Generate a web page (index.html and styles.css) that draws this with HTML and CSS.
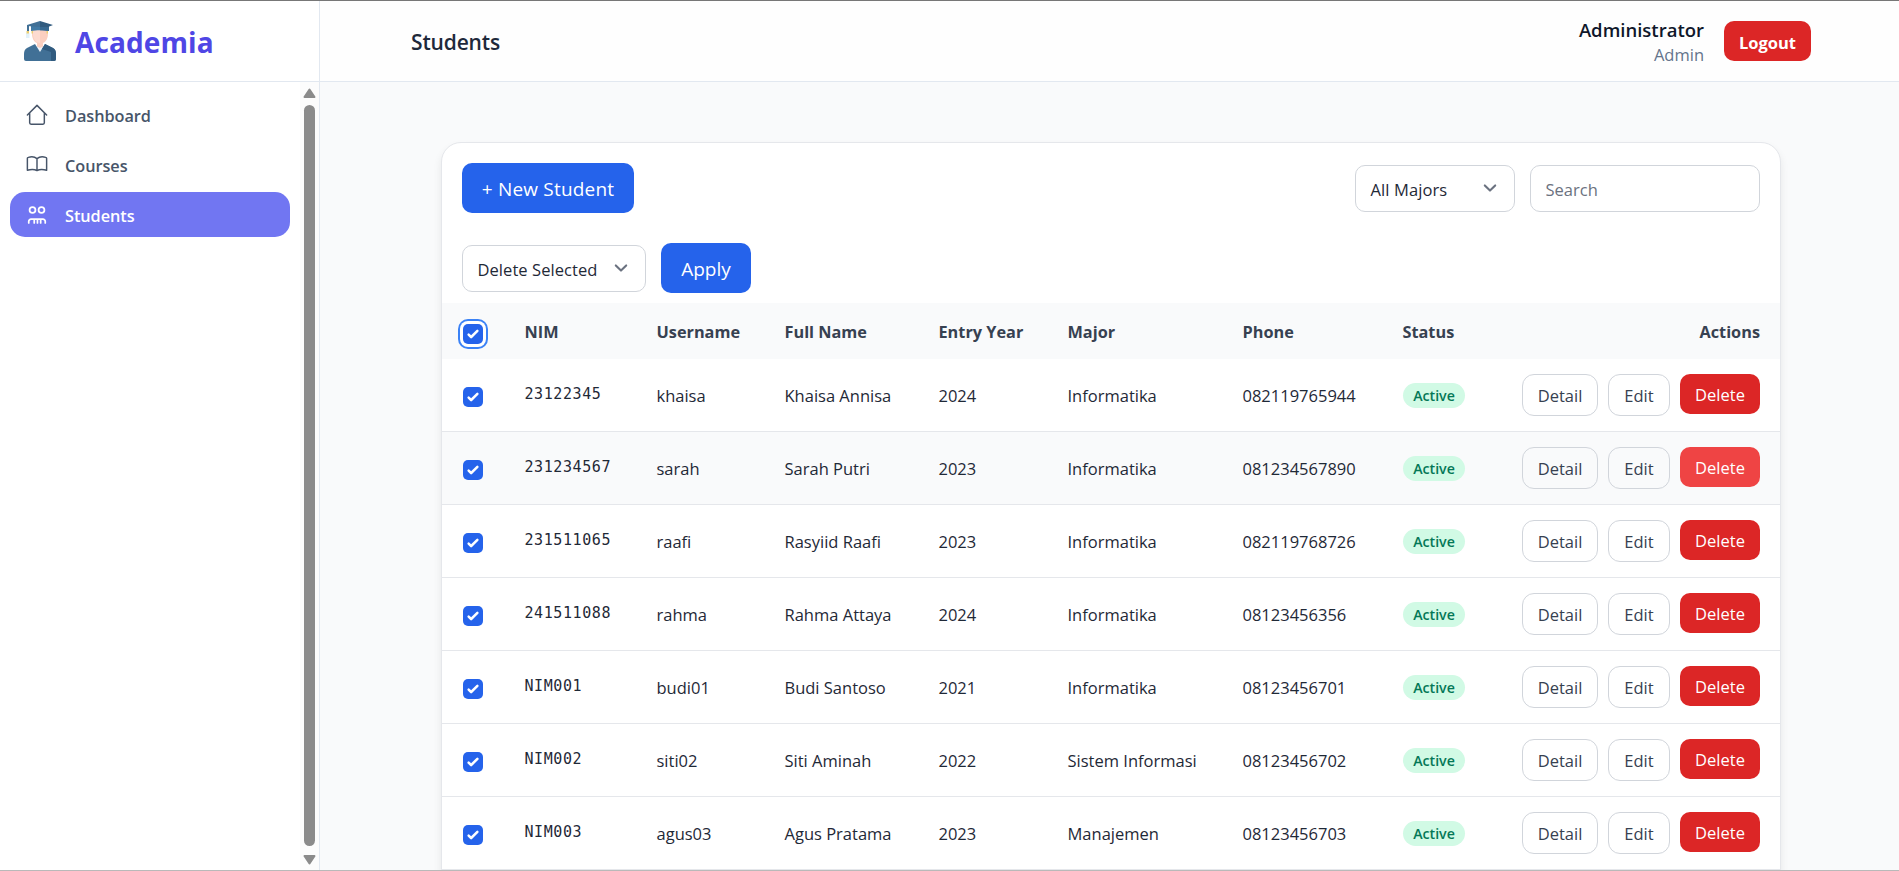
FILE: index.html
```html
<!DOCTYPE html>
<html lang="en">
<head>
<meta charset="utf-8">
<title>Students - Academia</title>
<link rel="stylesheet" href="styles.css">
</head>
<body>
<svg class="defs" aria-hidden="true">
  <symbol id="tick" viewBox="0 0 16 16"><path fill="#fff" d="M12.207 4.793a1 1 0 0 1 0 1.414l-5 5a1 1 0 0 1-1.414 0l-2-2a1 1 0 0 1 1.414-1.414L6.5 9.086l4.293-4.293a1 1 0 0 1 1.414 0z"/></symbol>
  <symbol id="chevron" viewBox="0 0 20 20"><path fill="none" stroke="#6b7280" stroke-width="1.6" stroke-linecap="round" stroke-linejoin="round" d="M6 8l4 4 4-4"/></symbol>
</svg>
<div class="app">
  <aside class="sidebar">
    <div class="brand">
      <svg class="logo" viewBox="0 0 32 40">
        <path fill="#fbcfc0" d="M8 9h16v4c0 4-2 8-5 9v6h-6v-6c-3-1-5-5-5-9z"/>
        <path fill="#fddbd0" d="M9 9h7v13c-4 0-7-4-7-9z"/>
        <path fill="#eef4fa" d="M12 25l4 2 4-2v3l-4 4-4-4z"/>
        <path fill="#417096" d="M11 23l5 8 5-8 8 4c2 1 3 3 3 6v5q0 2-2 2H2q-2 0-2-2v-5c0-3 1-5 3-6z"/>
        <path fill="#315b7f" d="M21 23l8 4c2 1 3 3 3 6v5q0 2-2 2h-3V31l-9-3z"/>
        <path fill="#417aa5" d="M7 5h18v5c-5-1-13-1-18 0z"/>
        <path fill="#376991" d="M16 5h9v5c-3-.6-6-.8-9-.8z"/>
        <path fill="#417096" d="M3 4l13-4v6L3 5z"/>
        <path fill="#315b7f" d="M16 0l13 4-5 2-8 0z"/>
        <path fill="#417096" d="M3 4h2v6H3z"/>
        <path fill="#e2f1fa" d="M2 12h3.500v5H2z"/>
        <path fill="#eccf72" d="M2.500 10H5v2.500H2.500zM7.500 10H9v2.500H7.500zM22.500 10H24v2.500h-1.500z"/>
      </svg>
      <span class="brand-name">Academia</span>
    </div>
    <div class="side-body">
      <nav class="nav">
        <a class="nav-item"><svg class="nav-icon" viewBox="0 0 24 24"><path d="M1.500 12L12 1.500 22.500 12M4 9.700V20.500a1.500 1.500 0 0 0 1.500 1.500h13a1.500 1.500 0 0 0 1.500-1.500V9.700"/></svg><span>Dashboard</span></a>
        <a class="nav-item"><svg class="nav-icon" viewBox="0 0 24 24"><path d="M12 5C9.500 3 5.500 2.800 2.500 3.700a1 1 0 0 0-1 1v13C5 16.600 9.500 16.700 12 18c2.500-1.300 7-1.400 10.500-.3v-13a1 1 0 0 0-1-1C18.500 2.800 14.500 3 12 5zM12 5v13"/></svg><span>Courses</span></a>
        <a class="nav-item active"><svg class="nav-icon" viewBox="0 0 24 24"><circle cx="7.100" cy="6.500" r="3.200"/><circle cx="16.900" cy="6.500" r="3.200"/><path d="M3 20.600v-1.600a2.500 2.500 0 0 1 2.500-2.500h13a2.500 2.500 0 0 1 2.500 2.500v1.600M9 16.500v4.100M12.500 16.500v4.100M16 16.500v4.100"/></svg><span>Students</span></a>
      </nav>
      <div class="scrollbar">
        <svg width="13" height="10" viewBox="0 0 13 10"><path fill="#8b8b8b" stroke="#8b8b8b" stroke-width="2" stroke-linejoin="round" d="M6.500 1.500L11.500 9h-10z"/></svg>
        <div class="thumb"></div>
        <svg width="13" height="10" viewBox="0 0 13 10"><path fill="#8b8b8b" stroke="#8b8b8b" stroke-width="2" stroke-linejoin="round" d="M6.500 8.500L11.500 1h-10z"/></svg>
      </div>
    </div>
  </aside>
  <div class="content">
    <header class="topbar">
      <h1>Students</h1>
      <div class="user">
        <div class="user-info"><div class="user-name">Administrator</div><div class="user-role">Admin</div></div>
        <button class="logout">Logout</button>
      </div>
    </header>
    <main>
      <section class="card">
        <div class="toolbar">
          <button class="primary new">+ New Student</button>
          <div class="filters">
            <div class="select majors"><span>All Majors</span><svg><use href="#chevron"/></svg></div>
            <input class="search" placeholder="Search">
          </div>
        </div>
        <div class="bulk">
          <div class="select action"><span>Delete Selected</span><svg><use href="#chevron"/></svg></div>
          <button class="primary apply">Apply</button>
        </div>
        <table>
          <colgroup><col class="c1"><col class="c2"><col class="c3"><col class="c4"><col class="c5"><col class="c6"><col class="c7"><col class="c8"><col></colgroup>
          <thead><tr><th><span class="check focus"><svg><use href="#tick"/></svg></span></th><th>NIM</th><th>Username</th><th>Full Name</th><th>Entry Year</th><th>Major</th><th>Phone</th><th>Status</th><th class="right">Actions</th></tr></thead>
          <tbody>
            <tr><td><span class="check"><svg><use href="#tick"/></svg></span></td><td class="mono">23122345</td><td>khaisa</td><td>Khaisa Annisa</td><td>2024</td><td>Informatika</td><td>082119765944</td><td><span class="badge">Active</span></td><td><div class="actions"><button class="btn detail">Detail</button><button class="btn edit">Edit</button><button class="btn delete">Delete</button></div></td></tr>
            <tr class="hovered"><td><span class="check"><svg><use href="#tick"/></svg></span></td><td class="mono">231234567</td><td>sarah</td><td>Sarah Putri</td><td>2023</td><td>Informatika</td><td>081234567890</td><td><span class="badge">Active</span></td><td><div class="actions"><button class="btn detail">Detail</button><button class="btn edit">Edit</button><button class="btn delete">Delete</button></div></td></tr>
            <tr><td><span class="check"><svg><use href="#tick"/></svg></span></td><td class="mono">231511065</td><td>raafi</td><td>Rasyiid Raafi</td><td>2023</td><td>Informatika</td><td>082119768726</td><td><span class="badge">Active</span></td><td><div class="actions"><button class="btn detail">Detail</button><button class="btn edit">Edit</button><button class="btn delete">Delete</button></div></td></tr>
            <tr><td><span class="check"><svg><use href="#tick"/></svg></span></td><td class="mono">241511088</td><td>rahma</td><td>Rahma Attaya</td><td>2024</td><td>Informatika</td><td>08123456356</td><td><span class="badge">Active</span></td><td><div class="actions"><button class="btn detail">Detail</button><button class="btn edit">Edit</button><button class="btn delete">Delete</button></div></td></tr>
            <tr><td><span class="check"><svg><use href="#tick"/></svg></span></td><td class="mono">NIM001</td><td>budi01</td><td>Budi Santoso</td><td>2021</td><td>Informatika</td><td>08123456701</td><td><span class="badge">Active</span></td><td><div class="actions"><button class="btn detail">Detail</button><button class="btn edit">Edit</button><button class="btn delete">Delete</button></div></td></tr>
            <tr><td><span class="check"><svg><use href="#tick"/></svg></span></td><td class="mono">NIM002</td><td>siti02</td><td>Siti Aminah</td><td>2022</td><td>Sistem Informasi</td><td>08123456702</td><td><span class="badge">Active</span></td><td><div class="actions"><button class="btn detail">Detail</button><button class="btn edit">Edit</button><button class="btn delete">Delete</button></div></td></tr>
            <tr><td><span class="check"><svg><use href="#tick"/></svg></span></td><td class="mono">NIM003</td><td>agus03</td><td>Agus Pratama</td><td>2023</td><td>Manajemen</td><td>08123456703</td><td><span class="badge">Active</span></td><td><div class="actions"><button class="btn detail">Detail</button><button class="btn edit">Edit</button><button class="btn delete">Delete</button></div></td></tr>
          </tbody>
        </table>
      </section>
    </main>
  </div>
</div>
</body>
</html>
```
FILE: styles.css
```css
* { box-sizing: border-box; }
html, body { height: 100%; }
body {
  margin: 0;
  overflow: hidden;
  background: #f9fafb;
  color: #1f2937;
  font: 16.5px/25px "Open Sans", "Noto Sans", sans-serif;
}
button, input { font: inherit; margin: 0; }
button { border: 0; padding: 0; display: block; }
.defs { position: absolute; width: 0; height: 0; }

.app {
  display: flex;
  height: 871px;
  overflow: hidden;
  border-top: 1px solid #777;
  border-bottom: 1px solid #b9b9b9;
}

/* Sidebar */
.sidebar {
  width: 320px;
  flex: none;
  display: flex;
  flex-direction: column;
  background: #fff;
  border-right: 1px solid #e2e8f0;
}
.brand {
  height: 81px;
  flex: none;
  display: flex;
  align-items: center;
  padding-left: 24px;
  border-bottom: 1px solid #e2e8f0;
}
.logo { width: 32px; height: 40px; }
.brand-name {
  margin: 1px 0 0 19px;
  color: #4f46e5;
  font-size: 28px;
  font-weight: 700;
  line-height: 40px;
  letter-spacing: .1px;
}
.side-body { flex: 1; display: flex; min-height: 0; }
.nav { flex: 1; padding: 10px; display: flex; flex-direction: column; gap: 5px; }
.nav-item {
  height: 45px;
  display: flex;
  align-items: center;
  padding-left: 16px;
  border-radius: 15px;
  color: #475569;
  font-size: 16.300px;
  font-weight: 600;
  letter-spacing: -.05px;
}
.nav-item span { margin: 4px 0 0 17px; }
.nav-icon {
  width: 22px;
  height: 22px;
  fill: none;
  stroke: currentColor;
  stroke-width: 1.6;
  stroke-linecap: round;
  stroke-linejoin: round;
}
.active { background: #7176f2; color: #fff; }
.active .nav-icon { stroke-width: 1.9; }
.scrollbar {
  width: 19px;
  padding: 6px 0 5px;
  display: flex;
  flex-direction: column;
  align-items: center;
  background: #fcfcfc;
}
.thumb { flex: 1; width: 11px; margin: 7px 0 9px; border-radius: 6px; background: #8b8b8b; }

/* Top bar */
.content { flex: 1; min-width: 0; }
.topbar {
  height: 81px;
  display: flex;
  align-items: center;
  justify-content: space-between;
  padding: 0 88px 0 91px;
  background: #fefefe;
  border-bottom: 1px solid #e2e8f0;
}
h1 { margin: 2px 0 0; font-size: 21px; line-height: 30px; font-weight: 600; letter-spacing: -.15px; color: #1e293b; }
.user { display: flex; align-items: center; gap: 20px; }
.user-info { padding-top: 1px; text-align: right; }
.user-name { font-size: 18.500px; font-weight: 600; color: #0f172a; }
.user-role { color: #64748b; }
.logout {
  width: 87px;
  height: 40px;
  padding-top: 2px;
  border-radius: 10px;
  background: #dc2626;
  color: #fff;
  font-weight: 700;
}

/* Card */
main { padding: 60px 118px 0 121px; }
.card {
  height: 790px;
  border: 1px solid #e5e7eb;
  border-radius: 20px;
  background: #fff;
  box-shadow: 0 5px 8px rgba(0, 0, 0, .08);
}
.toolbar { display: flex; align-items: center; justify-content: space-between; padding: 20px 20px 0; }
.filters { display: flex; gap: 15px; }
.primary { height: 50px; padding-top: 2px; border-radius: 10px; background: #2563eb; color: #fff; font-size: 19px; }
.new { width: 172px; letter-spacing: .2px; }
.apply { width: 90px; }
.select, .search {
  height: 47px;
  border: 1px solid #d1d5db;
  border-radius: 10px;
  background: #fff;
}
.select { display: flex; align-items: center; justify-content: space-between; padding: 2px 11px 0 14.500px; }
.select svg { width: 26px; height: 26px; margin-top: -2px; }
.majors { width: 160px; letter-spacing: .1px; }
.search { width: 230px; padding: 2px 14.500px 0; }
.search::placeholder { color: #6b7280; opacity: 1; }
.action { width: 184px; letter-spacing: .06px; }
.bulk { display: flex; align-items: center; gap: 15px; padding: 30px 20px 10px; }

/* Table */
table { width: 1338px; table-layout: fixed; border-collapse: separate; border-spacing: 0; }
.c1 { width: 63px; }
.c2 { width: 132px; }
.c3 { width: 128px; }
.c4 { width: 154px; }
.c5 { width: 129px; }
.c6 { width: 175px; }
.c7 { width: 160px; }
.c8 { width: 110px; }
th, td { padding: 0 0 0 19.500px; text-align: left; white-space: nowrap; vertical-align: middle; }
th { height: 56px; padding-top: 2px; background: #f9fafb; color: #374151; font-size: 16.300px; font-weight: 700; }
.right { text-align: right; padding-right: 20px; }
td { height: 73px; border-bottom: 1px solid #e5e7eb; }
.hovered { background: #f9fafb; }
.mono { padding-bottom: 1px; font-family: "DejaVu Sans Mono", monospace; font-size: 15px; letter-spacing: .58px; }
.check {
  display: block;
  width: 20px;
  height: 20px;
  margin: 3px 0 0 1.500px;
  border-radius: 5px;
  background: #2563eb;
}
.check svg { display: block; width: 20px; height: 20px; }
.focus { margin-top: 3px; box-shadow: 0 0 0 3px #fff, 0 0 0 5px #3b82f6; }
.badge {
  display: block;
  width: 62px;
  height: 25px;
  margin-left: .5px;
  border-radius: 13px;
  background: #d1fae5;
  color: #047857;
  font-size: 14.200px;
  font-weight: 600;
  text-align: center;
}
.actions { display: flex; justify-content: flex-end; align-items: flex-start; gap: 10px; padding-right: 20px; }
.btn { height: 42px; border: 1px solid #d1d5db; border-radius: 12px; background: transparent; color: #374151; }
.detail { width: 76px; }
.edit { width: 62px; }
.delete { width: 80px; height: 40px; border: 0; border-radius: 10px; background: #dc2626; color: #fff; }
.hovered .delete { background: #ef4444; }
```
